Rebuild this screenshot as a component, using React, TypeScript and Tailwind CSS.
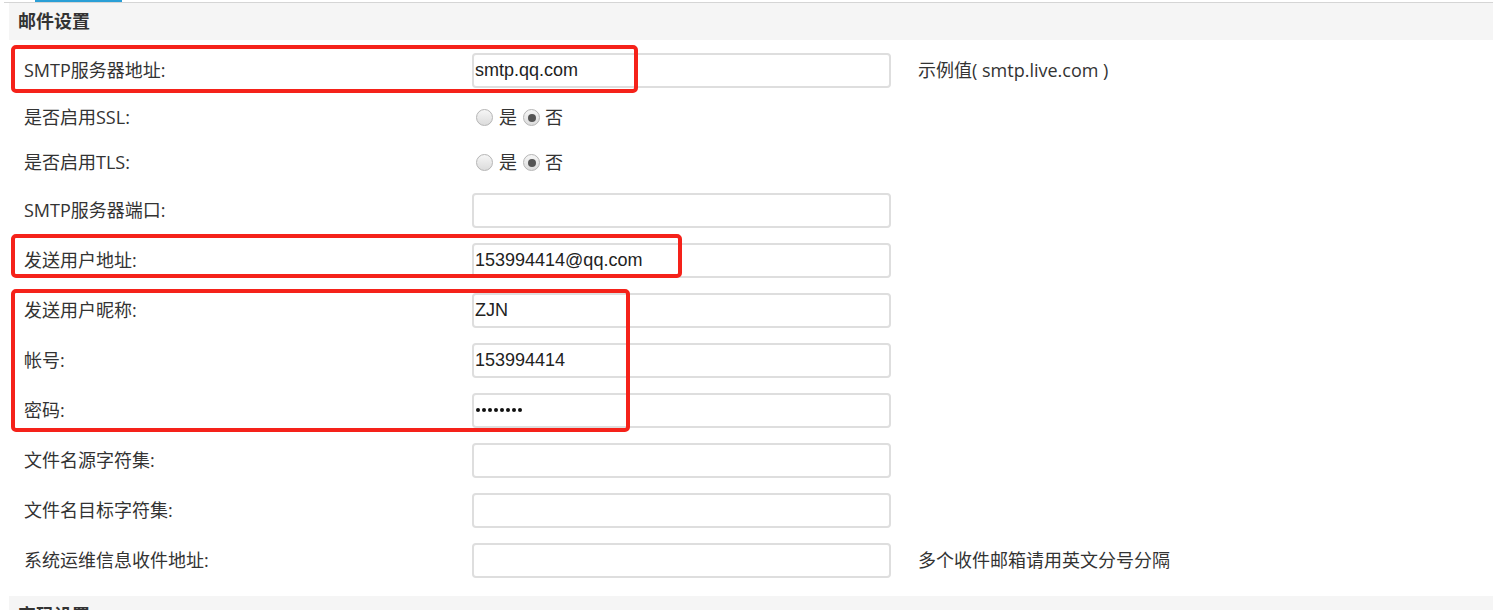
import React from 'react';

type Row =
  | { label: string; kind: 'input'; value?: string; hint?: string; password?: boolean }
  | { label: string; kind: 'radio' };

const rows: Row[] = [
  { label: 'SMTP服务器地址:', kind: 'input', value: 'smtp.qq.com', hint: '示例值( smtp.live.com )' },
  { label: '是否启用SSL:', kind: 'radio' },
  { label: '是否启用TLS:', kind: 'radio' },
  { label: 'SMTP服务器端口:', kind: 'input' },
  { label: '发送用户地址:', kind: 'input', value: '153994414@qq.com' },
  { label: '发送用户昵称:', kind: 'input', value: 'ZJN' },
  { label: '帐号:', kind: 'input', value: '153994414' },
  { label: '密码:', kind: 'input', value: '12345678', password: true },
  { label: '文件名源字符集:', kind: 'input' },
  { label: '文件名目标字符集:', kind: 'input' },
  { label: '系统运维信息收件地址:', kind: 'input', hint: '多个收件邮箱请用英文分号分隔' },
];

const cjk = { fontFamily: '"Open Sans", "Noto Sans CJK SC", "Microsoft YaHei", sans-serif' };
const latin = { fontFamily: '"Liberation Sans", Arial, "Noto Sans CJK SC", sans-serif' };

// 单选按钮：灰色渐变圆，选中时中间一个深灰点
const Radio: React.FC<{ checked?: boolean }> = ({ checked }) => (
  <span className="inline-flex h-[17px] w-[17px] items-center justify-center rounded-full border border-[#b5b5b5] bg-gradient-to-b from-[#f6f6f6] to-[#dcdcdc]">
    {checked && <span className="h-[8px] w-[8px] rounded-full bg-[#555]" />}
  </span>
);

const FormRow: React.FC<{ row: Row }> = ({ row }) => {
  const tall = row.kind === 'input';
  return (
    <div className={`flex items-center ${tall ? 'h-[50px]' : 'h-[45px]'}`}>
      <div className="w-[472px] shrink-0 pl-[24px] text-[18px] text-[#333]" style={cjk}>
        {row.label}
      </div>
      {row.kind === 'input' ? (
        <>
          <div
            className="flex h-[35px] w-[419px] shrink-0 items-center rounded-[4px] border-2 border-[#dedede] bg-white pl-[1px] text-[18px] text-[#222]"
            style={latin}
          >
            {row.password ? (
              <span className="flex gap-[2px] pl-[1px]">
                {Array.from({ length: 8 }).map((_, i) => (
                  <span key={i} className="h-[4px] w-[4px] rounded-full bg-[#111]" />
                ))}
              </span>
            ) : (
              row.value
            )}
          </div>
          {row.hint && (
            <div className="pl-[27px] text-[18px] text-[#333]" style={cjk}>
              {row.hint}
            </div>
          )}
        </>
      ) : (
        <div className="flex items-center pl-[4px] text-[18px] text-[#333]" style={cjk}>
          <Radio />
          <span className="ml-[6px] mr-[6px]">是</span>
          <Radio checked />
          <span className="ml-[5px]">否</span>
        </div>
      )}
    </div>
  );
};

const App: React.FC = () => {
  return (
    <div className="relative h-[610px] w-[1493px] overflow-hidden bg-white">
      {/* 顶部标签条 */}
      <div className="relative ml-[4px] h-[3px] border-b border-[#d5d5d5]">
        <div className="absolute left-[31px] top-0 h-[2px] w-[87px] bg-[#2a9fd6]" />
      </div>

      <div className="ml-[9px] flex h-[37px] items-center bg-[#f5f5f5] pl-[9px] text-[18px] font-bold text-[#333]" style={cjk}>
        邮件设置
      </div>

      <div className="pt-[5px]">
        {rows.map((row) => (
          <FormRow key={row.label} row={row} />
        ))}
      </div>

      <div className="ml-[9px] mt-[11px] flex h-[37px] items-start bg-[#f5f5f5] pl-[9px] pt-[6px] text-[18px] font-bold text-[#333]" style={cjk}>
        密码设置
      </div>

      {/* 截图上的红色标注框 */}
      <div className="pointer-events-none absolute left-[11px] top-[45px] h-[48px] w-[627px] rounded-[5px] border-[4px] border-[#f5221a]" />
      <div className="pointer-events-none absolute left-[11px] top-[234px] h-[44px] w-[671px] rounded-[5px] border-[4px] border-[#f5221a]" />
      <div className="pointer-events-none absolute left-[11px] top-[289px] h-[143px] w-[619px] rounded-[5px] border-[4px] border-[#f5221a]" />
    </div>
  );
};

export default App;
